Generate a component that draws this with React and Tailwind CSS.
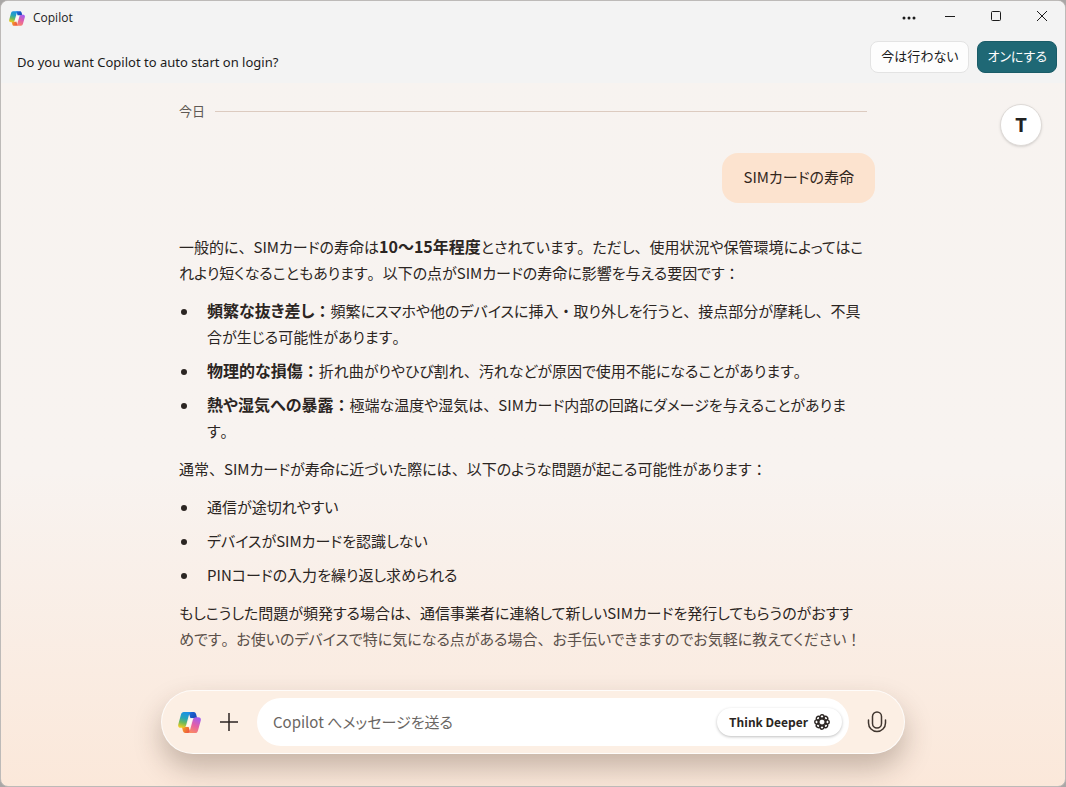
import { useState } from "react";

const causes = [
  { title: "頻繁な抜き差し：", lines: ["頻繁にスマホや他のデバイスに挿入・取り外しを行うと、接点部分が摩耗し、不具", "合が生じる可能性があります。"] },
  { title: "物理的な損傷：", lines: ["折れ曲がりやひび割れ、汚れなどが原因で使用不能になることがあります。"] },
  { title: "熱や湿気への暴露：", lines: ["極端な温度や湿気は、SIMカード内部の回路にダメージを与えることがありま", "す。"] }
];

const problems = ["通信が途切れやすい", "デバイスがSIMカードを認識しない", "PINコードの入力を繰り返し求められる"];

const petals = [0, 45, 90, 135, 180, 225, 270, 315];

// proportional kana, but full-width punctuation
function Text({ children }) {
  return children.split(/([、。：！・])/).map((part, index) =>
    index % 2 ? <span key={index} className="[font-feature-settings:normal]">{part}</span> : part
  );
}

function CopilotLogo({ id, className }) {
  return (
    <svg viewBox="0 0 48 44" className={className} aria-hidden="true">
      <defs>
        <linearGradient id={`${id}-left`} x1="0.6" y1="0" x2="0.35" y2="1">
          <stop offset="0" stopColor="#1b8fe6" />
          <stop offset="0.4" stopColor="#27a5b8" />
          <stop offset="0.7" stopColor="#6fbb58" />
          <stop offset="1" stopColor="#f0cb25" />
        </linearGradient>
        <linearGradient id={`${id}-right`} x1="0.7" y1="0" x2="0.3" y2="1">
          <stop offset="0" stopColor="#a45cf0" />
          <stop offset="0.5" stopColor="#e360a6" />
          <stop offset="1" stopColor="#fb8a63" />
        </linearGradient>
        <linearGradient id={`${id}-top`} x1="0" y1="0" x2="1" y2="0.6">
          <stop offset="0" stopColor="#1c6fe0" />
          <stop offset="1" stopColor="#1748b5" />
        </linearGradient>
        <linearGradient id={`${id}-bottom`} x1="0" y1="0" x2="1" y2="0.4">
          <stop offset="0" stopColor="#f7a823" />
          <stop offset="1" stopColor="#ec5440" />
        </linearGradient>
      </defs>
      <path d="M22 0h11c3 0 4 2 5 5l2 8H26z" fill={`url(#${id}-top)`} />
      <path d="M26 44H15c-3 0-4-2-5-5l-2-8h14z" fill={`url(#${id}-bottom)`} />
      <path d="M12 0h16c-3 1-4 3-5 6l-6 21c-1 4-3 6-7 6H6c-5 0-7-3-5-9L6 6c1-4 3-6 6-6z" fill={`url(#${id}-left)`} />
      <path d="M36 44H20c3-1 4-3 5-6l6-21c1-4 3-6 7-6h4c5 0 7 3 5 9l-5 18c-1 4-3 6-6 6z" fill={`url(#${id}-right)`} />
      <path d="M27 13h6c-2 1-3 2-4 5l-3 8c-1 3-2 5-5 5h-6c2-1 3-2 4-5l3-8c1-3 2-5 5-5z" fill="#fffaf5" />
    </svg>
  );
}

function RosetteIcon() {
  return (
    <svg viewBox="0 0 16 16" className="h-4 w-4" fill="none" stroke="currentColor" strokeWidth="1.4" aria-hidden="true">
      {petals.map((angle) => (
        <circle key={angle} cx="8" cy="2.9" r="2.1" transform={`rotate(${angle} 8 8)`} />
      ))}
      <circle cx="8" cy="8" r="4" />
    </svg>
  );
}

function TitleBar() {
  return (
    <div className="flex h-[34px] items-center">
      <CopilotLogo id="title" className="ml-2 h-[15px] w-4" />
      <h1 className="ml-2 text-xs">Copilot</h1>
      <div className="ml-auto flex h-full">
        <button aria-label="More" className="flex w-9 items-center justify-center">
          <svg viewBox="0 0 14 4" className="h-1 w-3.5" fill="currentColor"><circle cx="2" cy="2" r="1.5" /><circle cx="7" cy="2" r="1.5" /><circle cx="12" cy="2" r="1.5" /></svg>
        </button>
        <button aria-label="Minimize" className="flex w-[46px] items-center justify-center">
          <svg viewBox="0 0 10 10" className="h-2.5 w-2.5" stroke="currentColor"><path d="M0 3.500h10" /></svg>
        </button>
        <button aria-label="Maximize" className="flex w-[46px] items-center justify-center pb-1">
          <svg viewBox="0 0 10 10" className="h-2.5 w-2.5" fill="none" stroke="currentColor"><rect x="0.5" y="0.5" width="9" height="9" rx="1" /></svg>
        </button>
        <button aria-label="Close" className="flex w-[46px] items-center justify-center pb-1">
          <svg viewBox="0 0 10 10" className="h-2.5 w-2.5" stroke="currentColor"><path d="M0 0l10 10M10 0L0 10" /></svg>
        </button>
      </div>
    </div>
  );
}

function Bullet() {
  return <span className="ml-0.5 mr-5 mt-[11px] h-1.5 w-1.5 shrink-0 rounded-full bg-current" />;
}

function Composer() {
  const [message, setMessage] = useState("");

  return (
    <form onSubmit={(event) => event.preventDefault()} className="mx-auto flex h-16 w-full max-w-[744px] items-center rounded-[32px] border border-white/80 bg-[#fcefe4] pl-4 pr-[7px] shadow-[0_14px_28px_rgba(60,40,25,0.28)]">
      <button type="button" aria-label="Copilot" className="shrink-0">
        <CopilotLogo id="composer" className="h-[21px] w-[23px]" />
      </button>
      <button type="button" aria-label="Add" className="ml-3 flex h-8 w-8 shrink-0 items-center justify-center">
        <svg viewBox="0 0 18 18" className="h-[18px] w-[18px]" stroke="currentColor" strokeWidth="1.5"><path d="M9 0v18M0 9h18" /></svg>
      </button>
      <div className="ml-3 flex h-12 min-w-0 flex-1 items-center rounded-3xl bg-white pl-4 pr-[7px]">
        <input
          aria-label="メッセージ"
          value={message}
          onChange={(event) => setMessage(event.target.value)}
          placeholder="Copilot へメッセージを送る"
          className="min-w-0 flex-1 bg-transparent text-[15px] outline-none placeholder:text-[#6a6663]"
        />
        <button type="button" className="flex h-7 shrink-0 items-center gap-1.5 rounded-full bg-white px-3 text-xs font-bold shadow-[0_1px_3px_rgba(0,0,0,0.25)]">
          Think Deeper
          <RosetteIcon />
        </button>
      </div>
      <button type="button" aria-label="Voice" className="ml-2 flex h-10 w-10 shrink-0 items-center justify-center text-[#40362f]">
        <svg viewBox="0 0 20 22" className="h-[22px] w-5" fill="none" stroke="currentColor" strokeWidth="1.5" strokeLinecap="round">
          <rect x="5.5" y="1" width="9" height="16" rx="4.5" />
          <path d="M1.5 9v3a8.500 8.500 0 0 0 17 0V9" />
        </svg>
      </button>
    </form>
  );
}

export default function App() {
  return (
    <div className="min-h-screen bg-[#a9a7a6] font-['Noto_Sans_CJK_JP',sans-serif] text-[#2b2522]" lang="ja">
      <div className="flex min-h-screen flex-col overflow-hidden rounded-lg border border-[#bdbab8] bg-linear-to-b from-[#f7f3f0] via-[#f8f3f0] via-60% to-[#fbe8da]">
        <header className="bg-[#f3f3f3] pb-2.5 font-['Open_Sans','Noto_Sans_CJK_JP',sans-serif] text-[#1b1b1b]">
          <TitleBar />
          <div className="flex items-end gap-2 pl-4 pr-2 pt-1.5">
            <p className="mr-auto pb-px font-['Noto_Sans',sans-serif] text-[13px] leading-5">Do you want Copilot to auto start on login?</p>
            <button className="h-8 rounded-lg border border-[#e3e3e3] bg-[#fdfdfd] px-[10px] text-[13px] [font-feature-settings:'palt']">今は行わない</button>
            <button className="h-8 rounded-lg border border-[#1a5c68] bg-[#1f6875] px-[9px] text-[13px] text-white [font-feature-settings:'palt']">オンにする</button>
          </div>
        </header>

        <main className="relative flex flex-1 flex-col px-5 pb-8 [font-feature-settings:'palt']">
          <button aria-label="Account" className="absolute right-[23px] top-[21px] h-[42px] w-[42px] rounded-full border border-[#dedad7] bg-white font-['Open_Sans',sans-serif] text-xl font-bold text-[#222] shadow-sm">T</button>

          <div className="w-full pr-5">
            <div className="mx-auto w-full max-w-[688px] pt-[18px] text-[15px] leading-[26px]">
              <div className="flex h-5 items-center gap-2 text-[13px] text-[#5f5955]">
                <span className="w-7 leading-5">今日</span>
                <span className="h-px flex-1 bg-[#dccbc0]" />
              </div>

              <div className="-mr-2 mt-8 flex justify-end">
                <p className="rounded-2xl bg-[#fce3cf] px-[21px] pb-[13px] pt-[11px] text-[#33271d]">SIMカードの寿命</p>
              </div>

              <article className="mt-[31px] space-y-3 whitespace-nowrap">
                <p>
                  <Text>一般的に、SIMカードの寿命は</Text>
                  <strong className="text-base leading-none">10〜15年程度</strong>
                  <Text>とされています。ただし、使用状況や保管環境によってはこ</Text>
                  <br />
                  <Text>れより短くなることもあります。以下の点がSIMカードの寿命に影響を与える要因です：</Text>
                </p>
                <ul className="space-y-2">
                  {causes.map((cause) => (
                    <li key={cause.title} className="flex">
                      <Bullet />
                      <div>
                        <strong className="text-base leading-none"><Text>{cause.title}</Text></strong>
                        <Text>{cause.lines[0]}</Text>
                        {cause.lines[1] && <br />}
                        {cause.lines[1] && <Text>{cause.lines[1]}</Text>}
                      </div>
                    </li>
                  ))}
                </ul>
                <p><Text>通常、SIMカードが寿命に近づいた際には、以下のような問題が起こる可能性があります：</Text></p>
                <ul className="space-y-2">
                  {problems.map((problem) => (
                    <li key={problem} className="flex">
                      <Bullet />
                      {problem}
                    </li>
                  ))}
                </ul>
                <p>
                  <Text>もしこうした問題が頻発する場合は、通信事業者に連絡して新しいSIMカードを発行してもらうのがおすす</Text>
                  <br />
                  <span className="text-[#5a504a]">
                    <Text>めです。お使いのデバイスで特に気になる点がある場合、お手伝いできますのでお気軽に教えてください！</Text>
                  </span>
                </p>
              </article>
            </div>
          </div>

          <div className="mt-auto pt-8">
            <Composer />
          </div>
        </main>
      </div>
    </div>
  );
}
